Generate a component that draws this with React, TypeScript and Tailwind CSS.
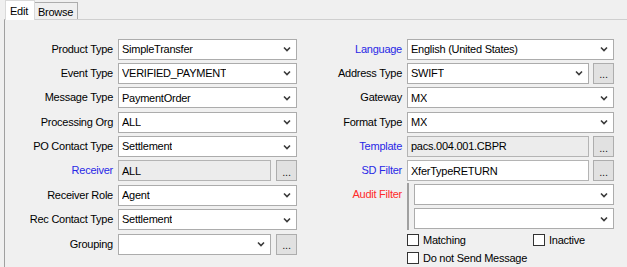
import React from "react";

const font = "font-['Liberation_Sans',Arial,sans-serif] text-[11px] tracking-[-0.25px]";

function Chevron() {
  return (
    <svg width="8" height="6" viewBox="0 0 8 6" className="shrink-0">
      <polyline points="1,1.5 4,4.5 7,1.5" fill="none" stroke="#3a3a3a" strokeWidth="1.6" />
    </svg>
  );
}

function Combo({ value = "", className = "" }: { value?: string; className?: string }) {
  return (
    <div
      className={`flex h-[21px] items-center justify-between border border-[#acacac] bg-white pl-[3px] pr-[5px] text-black ${className}`}
    >
      <span className="truncate">{value}</span>
      <Chevron />
    </div>
  );
}

function Field({ value = "", disabled = false, className = "" }: { value?: string; disabled?: boolean; className?: string }) {
  return (
    <div
      className={`flex h-[21px] items-center border border-[#b4b4b4] pl-[3px] text-black ${
        disabled ? "bg-[#ececec]" : "bg-white"
      } ${className}`}
    >
      {value}
    </div>
  );
}

function Dots() {
  return (
    <div className="flex h-[21px] w-[21px] shrink-0 items-center justify-center border border-[#adadad] bg-[#e1e1e1] pt-[3px] text-[11px] leading-none text-[#222]">
      ...
    </div>
  );
}

function Label({ children, color = "text-black" }: { children: React.ReactNode; color?: string }) {
  return <div className={`text-right leading-[21px] ${color}`}>{children}</div>;
}

function Check({ label }: { label: string }) {
  return (
    <div className="flex h-[13px] items-center gap-[4px]">
      <div className="h-[12px] w-[12px] border border-[#333] bg-white" />
      <span>{label}</span>
    </div>
  );
}

export default function App() {
  return (
    <div className={`h-[267px] w-[627px] overflow-hidden bg-[#f0f0f0] ${font}`}>
      {/* tabs */}
      <div className="flex h-[19px] items-end pl-[5px]">
        <div className="relative z-10 -mb-px flex h-[20px] w-[30px] items-start border-x border-t border-[#d9d9d9] bg-white pl-[4px] pt-[2px]">
          Edit
        </div>
        <div className="flex h-[17px] w-[43px] items-start border-r border-t border-[#adadad] bg-[#f0f0f0] pl-[3px] pt-[1px]">
          Browse
        </div>
      </div>
      {/* panel */}
      <div className="ml-[4px] flex h-[248px] items-start border-l border-t border-l-[#a0a0a0] border-t-[#cfcfcf] pt-[18.5px]">
        {/* left column */}
        <div className="grid w-[293px] grid-cols-[108px_179px] content-start items-center gap-x-[5px] gap-y-[3.4px]">
          <Label>Product Type</Label>
          <Combo value="SimpleTransfer" />
          <Label>Event Type</Label>
          <Combo value="VERIFIED_PAYMENT" />
          <Label>Message Type</Label>
          <Combo value="PaymentOrder" />
          <Label>Processing Org</Label>
          <Combo value="ALL" />
          <Label>PO Contact Type</Label>
          <Combo value="Settlement" />
          <Label color="text-[#2828e6]">Receiver</Label>
          <div className="flex gap-[5px]">
            <Field value="ALL" disabled className="flex-1" />
            <Dots />
          </div>
          <Label>Receiver Role</Label>
          <Combo value="Agent" />
          <Label>Rec Contact Type</Label>
          <Combo value="Settlement" />
          <Label>Grouping</Label>
          <div className="flex gap-[5px]">
            <Combo className="flex-1" />
            <Dots />
          </div>
        </div>
        {/* right column */}
        <div className="flex w-[316px] flex-col pl-[2px]">
          <div className="grid grid-cols-[102px_207px] content-start items-center gap-x-[5px] gap-y-[3.4px]">
            <Label color="text-[#2828e6]">Language</Label>
            <Combo value="English (United States)" />
            <Label>Address Type</Label>
            <div className="flex gap-[4px]">
              <Combo value="SWIFT" className="flex-1" />
              <Dots />
            </div>
            <Label>Gateway</Label>
            <Combo value="MX" />
            <Label>Format Type</Label>
            <Combo value="MX" />
            <Label color="text-[#2828e6]">Template</Label>
            <div className="flex gap-[4px]">
              <Field value="pacs.004.001.CBPR" disabled className="flex-1" />
              <Dots />
            </div>
            <Label color="text-[#2828e6]">SD Filter</Label>
            <div className="flex gap-[4px]">
              <Field value="XferTypeRETURN" className="flex-1" />
              <Dots />
            </div>
          </div>
          <div className="mt-[2px] grid grid-cols-[102px_207px] gap-x-[5px]">
            <div className="pt-[3px] text-right text-[#ff2a2a]">Audit Filter</div>
            <div className="flex flex-col gap-[3px] border-l-2 border-l-[#a0a0a0] py-[1px] pl-[5px]">
              <Combo />
              <Combo />
            </div>
          </div>
          <div className="ml-[107px] mt-[3px] flex flex-col gap-[5px]">
            <div className="grid grid-cols-[126px_auto]">
              <Check label="Matching" />
              <Check label="Inactive" />
            </div>
            <Check label="Do not Send Message" />
          </div>
        </div>
      </div>
    </div>
  );
}
